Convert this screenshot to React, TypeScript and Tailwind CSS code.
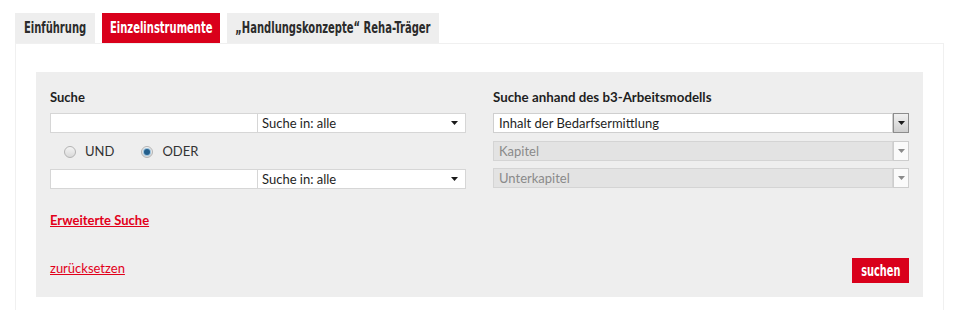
import React from 'react';

const tabs = [
  { label: 'Einführung', active: false, width: 'w-[80px]' },
  { label: 'Einzelinstrumente', active: true, width: 'w-[118px]' },
  { label: '„Handlungskonzepte“ Reha-Träger', active: false, width: 'w-[212px]' },
];

function Arrow({ color = '#1a1a1a' }: { color?: string }) {
  return (
    <svg width="7" height="4" viewBox="0 0 7 4">
      <path d="M0 0h7L3.5 4z" fill={color} />
    </svg>
  );
}

function Radio({ checked }: { checked?: boolean }) {
  return (
    <span className="flex h-[12px] w-[12px] items-center justify-center rounded-full border border-[#b3b3b3] bg-gradient-to-b from-[#f4f4f4] to-[#d9d9d9]">
      {checked && <span className="h-[6px] w-[6px] rounded-full bg-[#245f8c] ring-1 ring-[#9cc3de]" />}
    </span>
  );
}

function SearchRow() {
  return (
    <div className="flex h-5">
      <div className="w-[208px] border border-[#d6d6d6] bg-white" />
      <div className="flex w-[208px] items-center justify-between border border-l-0 border-[#d6d6d6] bg-white pl-[4px] pr-[7px]">
        <span className="text-[13px] leading-[18px] text-[#1e1e1e]">Suche in: alle</span>
        <Arrow />
      </div>
    </div>
  );
}

function ModelSelect({ label, disabled }: { label: string; disabled?: boolean }) {
  return (
    <div className="flex h-5">
      <div
        className={
          disabled
            ? 'flex flex-1 items-center border border-[#d4d4d4] bg-[#e3e3e3] pl-[5px] text-[13px] leading-[18px] text-[#8a8a8a]'
            : 'flex flex-1 items-center border border-[#cfcfcf] bg-white pl-[5px] text-[13px] leading-[18px] text-[#1e1e1e]'
        }
      >
        {label}
      </div>
      <div
        className={
          disabled
            ? 'flex w-4 items-center justify-center border border-[#cdcdcd] bg-[#fafafa]'
            : 'flex w-4 items-center justify-center border border-[#8c8c8c] bg-gradient-to-b from-[#f0f0f0] to-[#cfcfcf]'
        }
      >
        <Arrow color={disabled ? '#8a8a8a' : '#1a1a1a'} />
      </div>
    </div>
  );
}

export default function App() {
  return (
    <div className="min-h-screen bg-white pl-[15px] pt-[13px] font-['Lato',sans-serif] text-[#333]">
      {/* Tabs */}
      <div className="flex gap-[7px]">
        {tabs.map((t) => (
          <div
            key={t.label}
            className={`flex h-[30px] items-center justify-center ${t.width} ${
              t.active ? 'bg-[#d9001b] text-white' : 'bg-[#eeeeee] text-[#2b2b2b]'
            }`}
          >
            <span className="inline-block scale-x-[0.74] whitespace-nowrap font-['DejaVu_Sans_Condensed','DejaVu_Sans',sans-serif] text-[15px] font-bold">
              {t.label}
            </span>
          </div>
        ))}
      </div>

      {/* Panel */}
      <div className="w-[929px] border border-[#f0f0f0] bg-white px-5 pb-5 pt-7">
        <div className="bg-[#eeeeee] px-[14px] pb-[14px] pt-4">
          <div className="grid grid-cols-2 gap-x-[27px]">
            <div>
              <div className="h-[18px] text-[13px] font-bold leading-[18px] text-[#1e1e1e]">Suche</div>
              <div className="mt-[7px]">
                <SearchRow />
              </div>
              <div className="flex h-9 items-center pl-[14px] pt-[2px] text-[13px] text-[#333]">
                <Radio />
                <span className="ml-[9px]">UND</span>
                <span className="ml-[27px]">
                  <Radio checked />
                </span>
                <span className="ml-[9px]">ODER</span>
              </div>
              <SearchRow />
            </div>
            <div>
              <div className="h-[18px] text-[13.3px] font-bold leading-[18px] text-[#1e1e1e]">
                Suche anhand des b3-Arbeitsmodells
              </div>
              <div className="mt-[7px]">
                <ModelSelect label="Inhalt der Bedarfsermittlung" />
              </div>
              <div className="mt-2">
                <ModelSelect label="Kapitel" disabled />
              </div>
              <div className="mt-[7px]">
                <ModelSelect label="Unterkapitel" disabled />
              </div>
            </div>
          </div>

          <div className="mt-[22px] h-[18px] text-[13px] leading-[18px]">
            <a href="#" className="font-bold text-[#e2001a] underline">
              Erweiterte Suche
            </a>
          </div>

          <div className="mt-[29px] flex items-start justify-between">
            <a href="#" className="mt-[1px] text-[13px] leading-[18px] text-[#e2001a] underline">
              zurücksetzen
            </a>
            <button className="flex h-[25px] w-[57px] items-center justify-center bg-[#d9001b] text-white">
              <span className="inline-block scale-x-[0.68] whitespace-nowrap font-['DejaVu_Sans_Condensed','DejaVu_Sans',sans-serif] text-[16px] font-bold">
                suchen
              </span>
            </button>
          </div>
        </div>
      </div>
    </div>
  );
}
